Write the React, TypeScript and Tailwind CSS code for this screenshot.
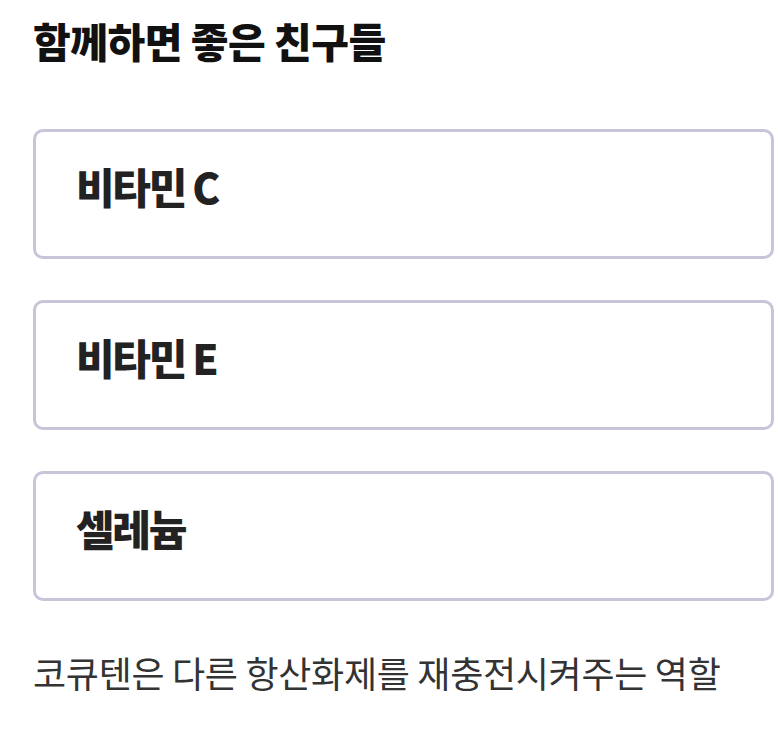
const friends = ['비타민 C', '비타민 E', '셀레늄']

export default function App() {
  return (
    <div
      className="w-[778px] h-[730px] bg-white px-[33px] pt-[20px] overflow-hidden"
      style={{ fontFamily: '"Noto Sans CJK KR", "Noto Sans", sans-serif' }}
    >
      <h2 className="text-[41px] leading-none font-black text-[#111] tracking-[-0.5px]">
        함께하면 좋은 친구들
      </h2>

      <div className="mt-[68px] flex flex-col gap-[41px] w-[741px]">
        {friends.map((name) => (
          <div
            key={name}
            className="h-[130px] flex items-center pl-[40px] pb-[16px] border-[3px] border-[#c6c5d9] rounded-[10px]"
          >
            <span className="text-[42px] leading-none font-black text-[#222] tracking-[-2.3px]">
              {name}
            </span>
          </div>
        ))}
      </div>

      <p className="mt-[53px] text-[36px] leading-none text-[#333] tracking-[-0.3px]">
        코큐텐은 다른 항산화제를 재충전시켜주는 역할
      </p>
    </div>
  )
}
